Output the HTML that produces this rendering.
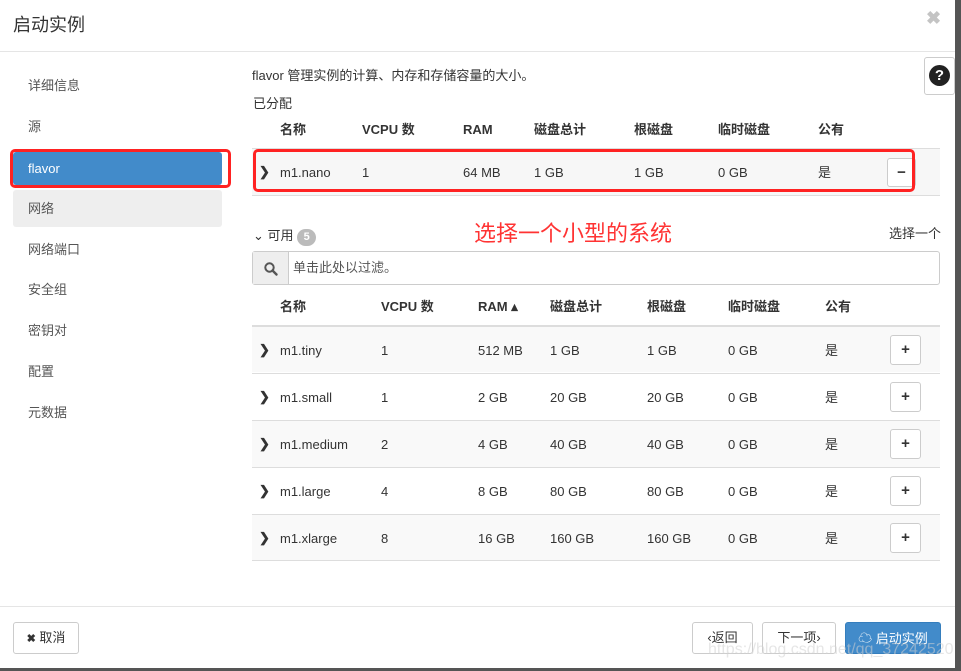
<!DOCTYPE html>
<html><head><meta charset="utf-8"><style>
*{margin:0;padding:0;box-sizing:border-box}
body{width:961px;height:671px;position:relative;background:#555;font-family:"Liberation Sans","Noto Sans CJK SC",sans-serif;font-size:13px;color:#333;overflow:hidden}
.modal{position:absolute;left:0;top:0;width:955px;height:668px;background:#fff}
.a{position:absolute;white-space:nowrap;line-height:16px}
.nav{position:absolute;left:13px;width:209px;height:37px;line-height:37px;padding-left:15px;color:#555;border-radius:3px}
.hd{font-weight:bold;color:#333}
.row{position:absolute;left:252px;width:688px;height:47px;border-top:1px solid #ddd}
.btn{position:absolute;border:1px solid #ccc;border-radius:3px;background:#fff;text-align:center}
</style></head><body>
<div class="modal">
<div class="a" style="left:13px;top:14px;font-size:18px;line-height:22px;color:#333">启动实例</div>
<div class="a" style="left:926px;top:10px;font-size:18px;color:#c4c4c4;font-weight:bold">✖</div>
<div class="a" style="left:0;top:51px;width:955px;height:1px;background:#e5e5e5"></div>

<div class="nav" style="top:67px">详细信息</div>
<div class="nav" style="top:108px">源</div>
<div class="nav" style="top:152px;height:33px;line-height:33px;background:#428bca;color:#fff">flavor</div>
<div class="nav" style="top:190px;background:#eee">网络</div>
<div class="nav" style="top:231px">网络端口</div>
<div class="nav" style="top:271px">安全组</div>
<div class="nav" style="top:312px">密钥对</div>
<div class="nav" style="top:353px">配置</div>
<div class="nav" style="top:394px">元数据</div>
<div class="a" style="left:10px;top:149px;width:221px;height:39px;border:3px solid #f22;border-radius:5px"></div>

<div class="a" style="left:252px;top:68px">flavor 管理实例的计算、内存和存储容量的大小。</div>
<div class="a" style="left:924px;top:57px;width:31px;height:38px;border:1px solid #ccc;border-radius:3px;background:#fff"></div>
<div class="a" style="left:929px;top:65px;width:21px;height:21px;border-radius:50%;background:#222;color:#fff;font-weight:bold;text-align:center;line-height:21px;font-size:15px">?</div>
<div class="a" style="left:253px;top:96px">已分配</div>

<div class="a hd" style="left:280px;top:122px">名称</div>
<div class="a hd" style="left:362px;top:122px">VCPU 数</div>
<div class="a hd" style="left:463px;top:122px">RAM</div>
<div class="a hd" style="left:534px;top:122px">磁盘总计</div>
<div class="a hd" style="left:634px;top:122px">根磁盘</div>
<div class="a hd" style="left:718px;top:122px">临时磁盘</div>
<div class="a hd" style="left:818px;top:122px">公有</div>
<div class="a" style="left:252px;top:148px;width:688px;height:48px;background:#f7f7f7;border-top:1px solid #ddd;border-bottom:1px solid #ddd"></div>
<div class="a" style="left:259px;top:164px;font-weight:bold">&#x276F;</div>
<div class="a" style="left:280px;top:165px">m1.nano</div>
<div class="a" style="left:362px;top:165px">1</div>
<div class="a" style="left:463px;top:165px">64 MB</div>
<div class="a" style="left:534px;top:165px">1 GB</div>
<div class="a" style="left:634px;top:165px">1 GB</div>
<div class="a" style="left:718px;top:165px">0 GB</div>
<div class="a" style="left:818px;top:165px">是</div>
<div class="btn" style="left:887px;top:158px;width:29px;height:29px;line-height:27px;font-weight:bold;font-size:15px">&#x2212;</div>
<div class="a" style="left:253px;top:149px;width:662px;height:43px;border:3px solid #f22;border-radius:5px"></div>

<div class="a" style="left:253px;top:227px;line-height:18px">&#x2304; 可用 <span style="display:inline-block;width:19px;height:17px;border-radius:9px;background:#bbb;color:#fff;font-size:11px;text-align:center;line-height:17px;font-weight:bold">5</span></div>
<div class="a" style="left:474px;top:220px;font-size:22px;line-height:28px;color:#f33">选择一个小型的系统</div>
<div class="a" style="left:889px;top:226px">选择一个</div>
<div class="a" style="left:252px;top:251px;width:688px;height:34px;border:1px solid #ccc;border-radius:3px"></div>
<div class="a" style="left:253px;top:252px;width:36px;height:32px;background:#eee;border-right:1px solid #ccc"></div>
<svg class="a" style="left:263px;top:261px" width="16" height="16" viewBox="0 0 16 16"><circle cx="6.5" cy="6.5" r="4.2" fill="none" stroke="#555" stroke-width="2"/><path d="M9.5 9.5 L13.5 13.5" stroke="#555" stroke-width="2.4" stroke-linecap="round"/></svg>
<div class="a" style="left:293px;top:260px;color:#555">单击此处以过滤。</div>

<div class="a hd" style="left:280px;top:299px">名称</div>
<div class="a hd" style="left:381px;top:299px">VCPU 数</div>
<div class="a hd" style="left:478px;top:299px">RAM &#x25B4;</div>
<div class="a hd" style="left:550px;top:299px">磁盘总计</div>
<div class="a hd" style="left:647px;top:299px">根磁盘</div>
<div class="a hd" style="left:728px;top:299px">临时磁盘</div>
<div class="a hd" style="left:825px;top:299px">公有</div>
<div class="row" style="top:325px;border-top:2px solid #ddd;background:#f9f9f9"></div>
<div class="row" style="top:373px"></div>
<div class="row" style="top:420px;background:#f9f9f9"></div>
<div class="row" style="top:467px"></div>
<div class="row" style="top:514px;background:#f9f9f9;border-bottom:1px solid #ddd"></div>

<div class="a" style="left:259px;top:342px;font-weight:bold">&#x276F;</div><div class="a" style="left:280px;top:343px">m1.tiny</div><div class="a" style="left:381px;top:343px">1</div><div class="a" style="left:478px;top:343px">512 MB</div><div class="a" style="left:550px;top:343px">1 GB</div><div class="a" style="left:647px;top:343px">1 GB</div><div class="a" style="left:728px;top:343px">0 GB</div><div class="a" style="left:825px;top:343px">是</div><div class="btn" style="left:890px;top:335px;width:31px;height:30px;line-height:28px;font-weight:bold;font-size:15px">+</div>
<div class="a" style="left:259px;top:389px;font-weight:bold">&#x276F;</div><div class="a" style="left:280px;top:390px">m1.small</div><div class="a" style="left:381px;top:390px">1</div><div class="a" style="left:478px;top:390px">2 GB</div><div class="a" style="left:550px;top:390px">20 GB</div><div class="a" style="left:647px;top:390px">20 GB</div><div class="a" style="left:728px;top:390px">0 GB</div><div class="a" style="left:825px;top:390px">是</div><div class="btn" style="left:890px;top:382px;width:31px;height:30px;line-height:28px;font-weight:bold;font-size:15px">+</div>
<div class="a" style="left:259px;top:436px;font-weight:bold">&#x276F;</div><div class="a" style="left:280px;top:437px">m1.medium</div><div class="a" style="left:381px;top:437px">2</div><div class="a" style="left:478px;top:437px">4 GB</div><div class="a" style="left:550px;top:437px">40 GB</div><div class="a" style="left:647px;top:437px">40 GB</div><div class="a" style="left:728px;top:437px">0 GB</div><div class="a" style="left:825px;top:437px">是</div><div class="btn" style="left:890px;top:429px;width:31px;height:30px;line-height:28px;font-weight:bold;font-size:15px">+</div>
<div class="a" style="left:259px;top:483px;font-weight:bold">&#x276F;</div><div class="a" style="left:280px;top:484px">m1.large</div><div class="a" style="left:381px;top:484px">4</div><div class="a" style="left:478px;top:484px">8 GB</div><div class="a" style="left:550px;top:484px">80 GB</div><div class="a" style="left:647px;top:484px">80 GB</div><div class="a" style="left:728px;top:484px">0 GB</div><div class="a" style="left:825px;top:484px">是</div><div class="btn" style="left:890px;top:476px;width:31px;height:30px;line-height:28px;font-weight:bold;font-size:15px">+</div>
<div class="a" style="left:259px;top:530px;font-weight:bold">&#x276F;</div><div class="a" style="left:280px;top:531px">m1.xlarge</div><div class="a" style="left:381px;top:531px">8</div><div class="a" style="left:478px;top:531px">16 GB</div><div class="a" style="left:550px;top:531px">160 GB</div><div class="a" style="left:647px;top:531px">160 GB</div><div class="a" style="left:728px;top:531px">0 GB</div><div class="a" style="left:825px;top:531px">是</div><div class="btn" style="left:890px;top:523px;width:31px;height:30px;line-height:28px;font-weight:bold;font-size:15px">+</div>

<div class="a" style="left:0;top:606px;width:955px;height:1px;background:#e5e5e5"></div>
<div class="btn" style="left:13px;top:622px;width:66px;height:32px;line-height:30px"><b style="font-size:11px">&#x2716;</b> 取消</div>
<div class="btn" style="left:692px;top:622px;width:61px;height:32px;line-height:30px">&#x2039;返回</div>
<div class="btn" style="left:762px;top:622px;width:74px;height:32px;line-height:30px">下一项&#x203A;</div>
<div class="btn" style="left:845px;top:622px;width:96px;height:32px;line-height:30px;background:#428bca;border-color:#357ebd;color:#fff"><span style="font-size:14px">&#x2601;</span> 启动实例</div>
<div class="a" style="left:708px;top:641px;font-size:16px;line-height:18px;color:rgba(210,210,210,.55)">https://blog.csdn.net/qq_37242520</div>
</div>
</body></html>
